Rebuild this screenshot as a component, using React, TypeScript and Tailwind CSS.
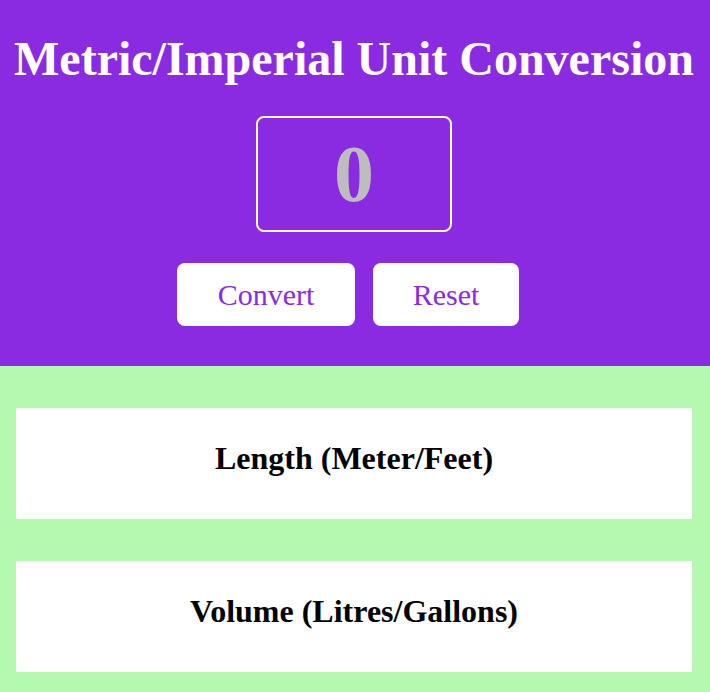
import { useState } from "react";

const SERIF = "font-['Liberation_Serif','Times_New_Roman',serif]";

export default function App() {
  const [value, setValue] = useState("");

  return (
    <div className={`min-h-screen bg-[#b5f9b1] ${SERIF}`}>
      {/* header — title, number input, actions */}
      <header className="bg-[#8a2be2]">
        <div className="mr-[2px] flex flex-col items-center pb-[40px] pt-[32px]">
          <h1 className="text-[48px] font-bold leading-[53px] text-white">Metric/Imperial Unit Conversion</h1>
          <input
            value={value}
            onChange={(e) => setValue(e.target.value)}
            placeholder="0"
            className="mt-[31px] box-border h-[116px] w-[196px] rounded-lg border-2 border-white bg-transparent text-center text-[80px] font-bold text-white outline-none placeholder:text-[#bdbdbd]"
          />
          <div className="mt-[31px] flex gap-[18px] pr-[12px]">
            <button type="button" className="h-[63px] w-[178px] rounded-lg bg-white text-[30px] text-[#8a2be2]">
              Convert
            </button>
            <button type="button" className="h-[63px] w-[146px] rounded-lg bg-white text-[30px] text-[#8a2be2]">
              Reset
            </button>
          </div>
        </div>
      </header>

      {/* result cards */}
      <main className="mr-[2px] flex flex-col gap-[42px] px-4 pb-[21px] pt-[42px]">
        <ResultCard title="Length (Meter/Feet)" />
        <ResultCard title="Volume (Litres/Gallons)" />
      </main>
    </div>
  );
}

function ResultCard({ title }: { title: string }) {
  return (
    <section className="flex h-[111px] items-center justify-center bg-white pb-[12px]">
      <h2 className="text-[32px] font-bold leading-none text-black">{title}</h2>
    </section>
  );
}
